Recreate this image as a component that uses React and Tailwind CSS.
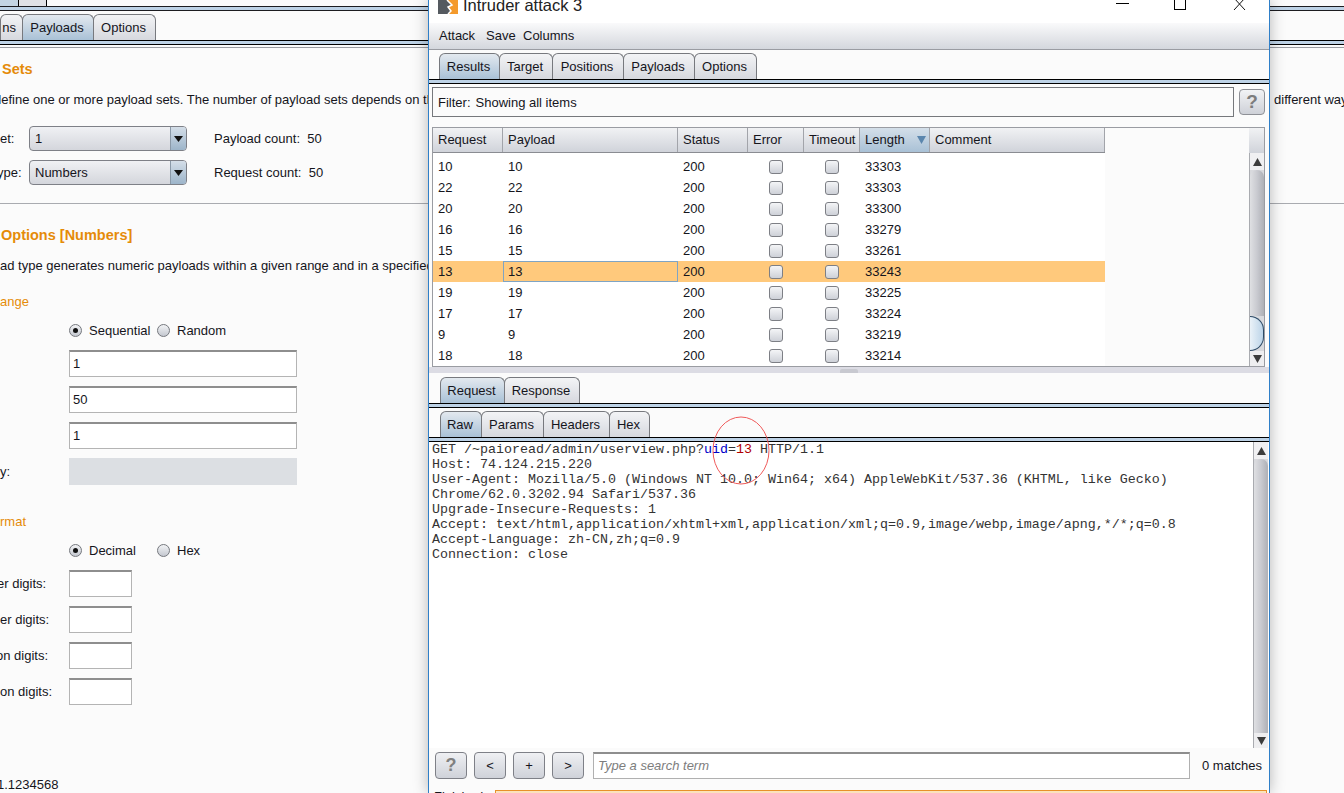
import React from 'react';

const rows = [
    [10, 33303], [22, 33303], [20, 33300], [16, 33279], [15, 33261],
    [13, 33243], [19, 33225], [17, 33224], [9, 33219], [18, 33214],
];

const columns = [
    { name: 'Request', width: 'w-[70px]' },
    { name: 'Payload', width: 'w-[175px]' },
    { name: 'Status', width: 'w-[70px]' },
    { name: 'Error', width: 'w-[56px]' },
    { name: 'Timeout', width: 'w-[56px]' },
    { name: 'Length', width: 'w-[70px]' },
    { name: 'Comment', width: 'w-[175px]' },
];

const Tab = ({ label, active, width }) => (
    <div
        className={`${width} h-[26px] -mr-px pr-[2px] flex items-center justify-center rounded-t-[6px] border border-b-0 border-[#77797e] bg-gradient-to-b ${
            active ? 'from-[#e3e9ef] to-[#a9c1d6]' : 'from-[#f3f4f6] to-[#d6d8de]'
        }`}
    >
        {label}
    </div>
);

const TabLines = () => (
    <div className="h-[5px] shrink-0 border-y border-black bg-[#bdd2e6]" />
);

const Arrow = ({ down }) => (
    <svg width="9" height="8" viewBox="0 0 9 8">
        <path d={down ? 'M0 0H9L4.5 8Z' : 'M0 8H9L4.5 0Z'} fill="#3c3c3c" />
    </svg>
);

const Combo = ({ value }) => (
    <div className="w-[158px] h-[25px] flex rounded-[4px] border border-[#7e8087] bg-gradient-to-b from-[#f0f1f4] to-[#d4d6dc] overflow-hidden">
        <div className="flex-1 pl-[5px] flex items-center">{value}</div>
        <div className="w-[16px] flex items-center justify-center border-l border-[#8a99a8] bg-gradient-to-b from-[#d4dee8] to-[#9db5ca]">
            <svg width="9" height="6" viewBox="0 0 9 6">
                <path d="M0 0H9L4.5 6Z" fill="#111" />
            </svg>
        </div>
    </div>
);

const Radio = ({ on }) => (
    <div className="w-[13px] h-[13px] rounded-full border border-[#75787e] bg-gradient-to-b from-[#f2f3f5] to-[#c4c8d0] flex items-center justify-center">
        {on && <div className="w-[5px] h-[5px] rounded-full bg-[#111]" />}
    </div>
);

const Input = ({ value, width, disabled }) => (
    <div
        className={`${width} h-[27px] pl-[3px] flex items-center ${
            disabled
                ? 'bg-[#dcdfe3]'
                : 'bg-white border border-[#b4b4b4] border-t-2 border-t-[#8e8e8e]'
        }`}
    >
        {value}
    </div>
);

const DigitRow = ({ label, labelClass, className }) => (
    <div className={`flex items-center h-[27px] ${className}`}>
        <div className="w-[69px] whitespace-nowrap"><div className={labelClass}>{label}</div></div>
        <Input width="w-[63px]" />
    </div>
);

const Check = () => (
    <div className="mx-auto w-[14px] h-[14px] rounded-[3px] border border-[#7d7f85] bg-gradient-to-b from-[#f4f5f7] to-[#ced1d8]" />
);

const Scrollbar = ({ thumb }) => (
    <div className="w-[15px] h-full flex flex-col bg-[#d8d9dd] border-l border-[#a9abb0]">
        <div className="h-[17px] flex items-center justify-center bg-[#f0f0f2]">
            <Arrow />
        </div>
        <div className="flex-1 flex flex-col min-h-0">
            <div className="flex-1 rounded-t-[8px] bg-gradient-to-r from-[#dfe0e3] via-[#c9cad0] to-[#aeb0b6]" />
            {thumb && (
                <div className="h-[35px] shrink-0 rounded-r-[14px] border-y border-r border-[#2c4a66] bg-gradient-to-r from-[#eaf2f8] to-[#bcd4e8]" />
            )}
        </div>
        <div className="h-[15px] flex items-center justify-center bg-[#eeeef0]">
            <Arrow down />
        </div>
    </div>
);

const ToolButton = ({ label, muted }) => (
    <div
        className={`w-[32px] h-[27px] flex items-center justify-center rounded-[4px] border border-[#7e8087] bg-gradient-to-b from-[#eff0f3] to-[#cfd2d9] ${
            muted ? "text-[#808080] font-bold text-[18px]" : ''
        }`}
    >
        {label}
    </div>
);

const BackgroundPanel = () => (
    <div className="w-[1344px] h-[793px] bg-[#fbfbfb]">
        <div className="flex h-[6px]">
            <div className="w-[18px] bg-[#c3d4e3]" />
            <div className="w-[29px] bg-[#e0e1e5] border-x border-black" />
        </div>
        <div className="h-[5px] bg-[#bdd2e6] border-y border-[#1c1c20]" />
        <div className="flex h-[29px] items-end">
            <Tab label={<span className="flex w-full justify-end pr-[4px]">ns</span>} width="w-[23px]" />
            <Tab label="Payloads" active width="w-[72px]" />
            <Tab label="Options" width="w-[63px]" />
        </div>
        <TabLines />
        <div className="h-[3px] border-b border-[#9a9ca2]" />

        <h2 className="mt-[13px] h-[17px] leading-[17px] pl-[2px] font-bold text-[14.5px] text-[#e58b09]">Sets</h2>
        <div className="mt-[14px] flex justify-between h-[15px] leading-[15px] whitespace-nowrap">
            <span className="-ml-[6px]">define one or more payload sets. The number of payload sets depends on the</span>
            <span className="-mr-[10px]">different ways</span>
        </div>

        <div className="mt-[19px] flex items-center h-[25px]">
            <div className="w-[29px] whitespace-nowrap">et:</div>
            <Combo value="1" />
            <div className="ml-[27px]">Payload count:&nbsp; 50</div>
        </div>
        <div className="mt-[9px] flex items-center h-[25px]">
            <div className="w-[32px] -ml-[3px] whitespace-nowrap">ype:</div>
            <Combo value="Numbers" />
            <div className="ml-[27px]">Request count:&nbsp; 50</div>
        </div>
        <div className="mt-[18px] border-t border-[#a9abb0]" />

        <h2 className="mt-[23px] h-[17px] leading-[17px] pl-[1px] font-bold text-[14.5px] text-[#e58b09]">Options [Numbers]</h2>
        <p className="mt-[14px] h-[15px] leading-[15px] whitespace-nowrap">ad type generates numeric payloads within a given range and in a specified</p>

        <div className="mt-[21px] h-[15px] leading-[15px] text-[#e58b09]">ange</div>
        <div className="mt-[14px] h-[15px] pl-[69px] flex items-center">
            <Radio on />
            <span className="ml-[7px] w-[68px]">Sequential</span>
            <Radio />
            <span className="ml-[7px]">Random</span>
        </div>
        <div className="mt-[12px] pl-[69px] flex flex-col gap-[9px]">
            <Input value="1" width="w-[228px]" />
            <Input value="50" width="w-[228px]" />
            <Input value="1" width="w-[228px]" />
        </div>
        <div className="mt-[9px] flex items-center h-[27px]">
            <div className="w-[69px]">y:</div>
            <Input disabled width="w-[228px]" />
        </div>

        <div className="mt-[29px] h-[15px] leading-[15px] text-[#e58b09]">rmat</div>
        <div className="mt-[14px] h-[15px] pl-[69px] flex items-center">
            <Radio on />
            <span className="ml-[7px] w-[68px]">Decimal</span>
            <Radio />
            <span className="ml-[7px]">Hex</span>
        </div>
        <DigitRow label="er digits:" labelClass="-ml-[3px]" className="mt-[12px]" />
        <DigitRow label="er digits:" className="mt-[9px]" />
        <DigitRow label="on digits:" labelClass="-ml-[4px]" className="mt-[9px]" />
        <DigitRow label="on digits:" className="mt-[9px]" />
        <div className="mt-[72px] h-[15px] leading-[15px] -ml-[3px] whitespace-nowrap">1.1234568</div>
    </div>
);

const AttackWindow = () => (
    <div className="absolute left-[428px] top-0 w-[842px] h-[793px] flex flex-col border-x border-[#2f7fc8] bg-[#fbfbfb] shadow-[0_0_14px_rgba(0,0,0,0.28)] overflow-hidden">
        <div className="relative h-[23px] bg-white flex shrink-0">
            <svg className="ml-[9px]" width="20" height="14" viewBox="0 0 20 14">
                <rect width="20" height="14" fill="#f49a2c" />
                <path d="M0 0H9L14 5L10 7L13 11L10 14H0Z" fill="#555a60" />
                <path d="M9 0L14 5L10 7L13 11L10 14" fill="none" stroke="#fff" strokeWidth="1.5" />
            </svg>
            <span className="ml-[5px] -mt-[4px] h-[19px] leading-[19px] text-[16.5px] text-[#222]">Intruder attack 3</span>
            <div className="absolute left-[687px] top-[3px] w-[13px] border-t border-black" />
            <div className="absolute left-[745px] -top-px w-[12px] h-[11px] border border-black" />
            <svg className="absolute left-[804px] top-0" width="13" height="10" viewBox="0 0 13 10">
                <path d="M1 -2L12 10M12 -2L1 10" stroke="#111" fill="none" />
            </svg>
        </div>

        <div className="h-[27px] shrink-0 flex items-center pl-[10px] bg-gradient-to-b from-[#fafafb] to-[#d4d7dd] border-b border-[#9a9ca2]">
            <span className="w-[47px]">Attack</span>
            <span className="w-[37px]">Save</span>
            <span>Columns</span>
        </div>

        <div className="flex pl-[10px] pt-[3px] h-[29px] shrink-0 items-end">
            <Tab label="Results" active width="w-[61px]" />
            <Tab label="Target" width="w-[54px]" />
            <Tab label="Positions" width="w-[72px]" />
            <Tab label="Payloads" width="w-[72px]" />
            <Tab label="Options" width="w-[63px]" />
        </div>
        <TabLines />

        <div className="flex pl-[3px] mt-[3px] h-[30px] shrink-0">
            <div className="w-[802px] pl-[5px] pt-px flex items-center gap-[5px] border border-[#76787c]">
                <span>Filter:</span>
                <span>Showing all items</span>
            </div>
            <div className="ml-[5px] mt-[2px] w-[26px] h-[26px] flex items-center justify-center rounded-[4px] border border-[#8e9096] bg-gradient-to-b from-[#f2f3f5] to-[#ced1d8] text-[#7d7d7d] font-bold text-[19px]">?</div>
        </div>

        <div className="mt-[10px] ml-[3px] w-[833px] h-[240px] shrink-0 flex border border-[#9a9ca2] overflow-hidden">
            <div className="w-[672px] shrink-0">
                <div className="flex h-[25px] border-b border-[#8a8c92]">
                    {columns.map((col) => (
                        <div
                            key={col.name}
                            className={`${col.width} pl-[5px] flex items-center justify-between border-r border-[#a2a4aa] bg-gradient-to-b ${
                                col.name === 'Length' ? 'from-[#d4dfe9] to-[#a9c1d6]' : 'from-[#f1f2f4] to-[#d0d3da]'
                            }`}
                        >
                            {col.name}
                            {col.name === 'Length' && (
                                <svg className="mr-[3px]" width="9" height="8" viewBox="0 0 9 8">
                                    <path d="M0 0H9L4.5 8Z" fill="#5b86ad" />
                                </svg>
                            )}
                        </div>
                    ))}
                </div>
                <div className="bg-white h-[214px] pt-[3px]">
                    {rows.map(([id, length]) => (
                        <div key={id} className={`flex h-[21px] items-center ${id === 13 ? 'bg-[#ffc97c]' : ''}`}>
                            <div className="w-[70px] pl-[5px]">{id}</div>
                            <div className={`w-[175px] h-full flex items-center ${id === 13 ? 'pl-[4px] border border-[#7fa4c4]' : 'pl-[5px]'}`}>{id}</div>
                            <div className="w-[70px] pl-[5px]">200</div>
                            <div className="w-[56px]"><Check /></div>
                            <div className="w-[56px]"><Check /></div>
                            <div className="w-[70px] pl-[5px]">{length}</div>
                        </div>
                    ))}
                </div>
            </div>
            <div className="w-[144px] shrink-0" />
            <div className="w-[15px] shrink-0 flex flex-col">
                <div className="h-[25px] shrink-0 bg-gradient-to-b from-[#f1f2f4] to-[#d0d3da]" />
                <div className="flex-1 min-h-0"><Scrollbar thumb /></div>
            </div>
        </div>

        <div className="relative h-[6px] shrink-0 bg-[#dcdce4]">
            <div className="absolute left-[411px] top-[2px] w-[18px] h-[4px] rounded-t-[2px] bg-[#c8c9d0]" />
        </div>

        <div className="flex pl-[11px] pt-[3px] h-[30px] shrink-0 items-end">
            <Tab label="Request" active width="w-[65px]" />
            <Tab label="Response" width="w-[76px]" />
        </div>
        <TabLines />
        <div className="flex pl-[11px] pt-[3px] h-[29px] shrink-0 items-end">
            <Tab label="Raw" active width="w-[42px]" />
            <Tab label="Params" width="w-[63px]" />
            <Tab label="Headers" width="w-[67px]" />
            <Tab label="Hex" width="w-[41px]" />
        </div>
        <TabLines />

        <div className="h-[306px] shrink-0 flex bg-white">
            <pre className="flex-1 pl-[3px] font-['Liberation_Mono',monospace] text-[13.33px] leading-[15px] text-[#333333]">
                GET /~paioread/admin/userview.php?<span className="text-[#0000c8]">uid</span>=<span className="text-[#b00000]">13</span> HTTP/1.1{'\n'}
                Host: 74.124.215.220{'\n'}
                User-Agent: Mozilla/5.0 (Windows NT 10.0; Win64; x64) AppleWebKit/537.36 (KHTML, like Gecko){'\n'}
                Chrome/62.0.3202.94 Safari/537.36{'\n'}
                Upgrade-Insecure-Requests: 1{'\n'}
                Accept: text/html,application/xhtml+xml,application/xml;q=0.9,image/webp,image/apng,*/*;q=0.8{'\n'}
                Accept-Language: zh-CN,zh;q=0.9{'\n'}
                Connection: close
            </pre>
            <div className="w-[15px] shrink-0 mr-px"><Scrollbar /></div>
        </div>

        <div className="flex items-center pl-[6px] pt-[4px] h-[31px] shrink-0 gap-[7px]">
            <ToolButton label="?" muted />
            <ToolButton label="<" />
            <ToolButton label="+" />
            <ToolButton label=">" />
            <div className="ml-[2px] w-[597px] h-[27px] pl-[4px] flex items-center bg-white border border-[#b0b0b0] border-t-2 border-t-[#8e8e8e] italic text-[#7d7d7d]">Type a search term</div>
            <span className="ml-[5px]">0 matches</span>
        </div>

        <div className="flex pl-[5px] mt-[10px] h-[10px] shrink-0">
            <span className="w-[61px] leading-[16px] whitespace-nowrap">Finished</span>
            <div className="w-[772px] h-[10px] mt-px bg-[#fbe3bd] border border-[#e8912a]" />
        </div>
    </div>
);

const App = () => {
    return (
        <div className="relative w-[1344px] h-[793px] overflow-hidden font-['Liberation_Sans',sans-serif] text-[13px] text-[#15151c]">
            <BackgroundPanel />
            <AttackWindow />
            <svg className="absolute left-[712px] top-[416px]" width="58" height="70" viewBox="0 0 58 70">
                <ellipse cx="29" cy="34.5" rx="28" ry="33.5" fill="none" stroke="#f05a5a" />
            </svg>
        </div>
    );
};

export default App;
